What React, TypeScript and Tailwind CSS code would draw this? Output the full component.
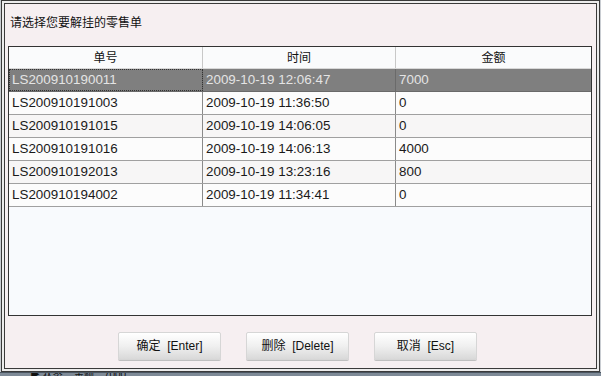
import React from "react";

const rows = [
  ["LS200910190011", "2009-10-19 12:06:47", "7000"],
  ["LS200910191003", "2009-10-19 11:36:50", "0"],
  ["LS200910191015", "2009-10-19 14:06:05", "0"],
  ["LS200910191016", "2009-10-19 14:06:13", "4000"],
  ["LS200910192013", "2009-10-19 13:23:16", "800"],
  ["LS200910194002", "2009-10-19 11:34:41", "0"],
];

const font = { fontFamily: '"Liberation Sans", "Noto Sans CJK SC", sans-serif' };

export default function App() {
  return (
    <div className="w-[601px] h-[376px] bg-[#c9cdd2] flex flex-col overflow-hidden" style={font}>
      <div className="w-[599px] h-[372px] ml-[1px] border border-[#3a3a3a] p-[2px] bg-[#ececec] shrink-0">
        <div className="h-full border border-[#3a3a3a] bg-[#f6eff1] flex flex-col">
          <div className="h-[37px] pl-[5px] flex items-center text-[12px] text-[#111]">
            请选择您要解挂的零售单
          </div>
          <div className="ml-[3px] mr-[4px] mt-[5px] h-[270px] border border-[#333] bg-[#f8fafd] flex flex-col">
            <div className="h-[22px] flex bg-[#fafbfc] text-[12px] text-[#111] border-b border-[#d8d8d8]">
              <div className="w-[194px] flex items-center justify-center border-r border-[#c8c8c8]">单号</div>
              <div className="w-[193px] flex items-center justify-center border-r border-[#c8c8c8]">时间</div>
              <div className="flex-1 flex items-center justify-center">金额</div>
            </div>
            {rows.map((r, i) => {
              const sel = i === 0;
              return (
                <div
                  key={r[0]}
                  className={
                    "h-[23px] flex text-[13.4px] border-b " +
                    (sel
                      ? "bg-[#7f7f7f] text-[#e4e4e4] border-[#6a6a6a]"
                      : i % 2 === 0
                      ? "bg-[#f7f6f6] text-[#1a1a1a] border-[#a0a0a0]"
                      : "bg-[#fcfcfc] text-[#1a1a1a] border-[#a0a0a0]")
                  }
                >
                  <div
                    className={
                      "w-[194px] flex items-center pl-[3px] border-r " +
                      (sel ? "border-[#6a6a6a] outline-1 outline-dotted outline-[#333] -outline-offset-1" : "border-[#8a8a8a]")
                    }
                  >
                    {r[0]}
                  </div>
                  <div className={"w-[193px] flex items-center pl-[3px] border-r " + (sel ? "border-[#6a6a6a]" : "border-[#8a8a8a]")}>
                    {r[1]}
                  </div>
                  <div className="flex-1 flex items-center pl-[3px]">{r[2]}</div>
                </div>
              );
            })}
          </div>
          <div className="mt-[16px] pl-[113px] flex gap-[25px]">
            {["确定  [Enter]", "删除  [Delete]", "取消  [Esc]"].map((t) => (
              <div
                key={t}
                className="w-[103px] h-[28px] flex items-center justify-center text-[12px] text-[#111] whitespace-pre rounded-[2px] border border-[#d6d6d6] bg-gradient-to-b from-[#ffffff] via-[#f0f0f0] to-[#d9d9d9] shadow-[0_1px_0_#bfbfbf]"
              >
                {t}
              </div>
            ))}
          </div>
        </div>
      </div>
      <div className="h-[4px] bg-[#7e8a97] border-t border-[#4a5560] overflow-hidden relative">
        <div className="absolute left-[30px] top-[-6px] text-[10px] text-[#111] whitespace-pre">▶ 状态    金额：7000</div>
      </div>
    </div>
  );
}
